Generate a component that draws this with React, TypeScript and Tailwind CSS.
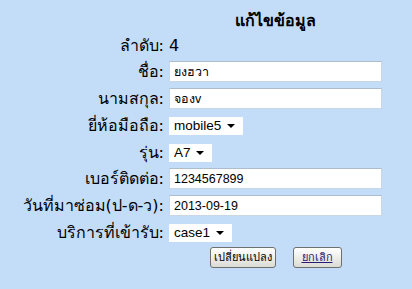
const thai = "font-['Tahoma','DejaVu_Sans','Noto_Sans',sans-serif]";

const Label = ({ children }: { children: React.ReactNode }) => (
  <div className={`w-[165px] shrink-0 text-right pr-[1px] text-[16px] text-black ${thai}`}>{children}</div>
);

const Row = ({ h, label, children }: { h: string; label: string; children: React.ReactNode }) => (
  <div className={`flex items-center ${h}`}>
    <Label>{label}</Label>
    <div className="pl-[4px] flex items-center">{children}</div>
  </div>
);

const TextBox = ({ value }: { value: string }) => (
  <input
    defaultValue={value}
    className={`w-[213px] h-[21px] bg-white border border-[#c9d6e4] border-t-[#aebdcc] px-[4px] text-[12.5px] text-black outline-none font-['Tahoma','Liberation_Sans','DejaVu_Sans',sans-serif]`}
  />
);

// drawn like the old XP select: white box, text, small black arrow
const DropDown = ({ value, w }: { value: string; w: string }) => (
  <div className={`${w} h-[18px] bg-white flex items-center justify-between pl-[5px] pr-[8px]`}>
    <span className="text-[13.5px] leading-none text-black font-['Liberation_Sans',Arial,sans-serif]">{value}</span>
    <svg width="8" height="4" viewBox="0 0 8 4" className="shrink-0">
      <path d="M0 0H8L4 4Z" fill="#000" />
    </svg>
  </div>
);

const Btn = ({ w, children }: { w: string; children: React.ReactNode }) => (
  <button
    className={`${w} h-[21px] rounded-[3px] border border-[#6f6f6f] bg-gradient-to-b from-white to-[#dcdcd6] text-[11px] leading-none text-black ${thai}`}
  >
    {children}
  </button>
);

export default function App() {
  return (
    <div className="w-[412px] h-[289px] bg-[#c3dcf8] pt-[9px] overflow-hidden">
      <div className="flex items-center h-[24px]">
        <div className="w-[165px]" />
        <div className={`pl-[4px] w-[217px] text-center font-bold text-[16px] ${thai}`}>แก้ไขข้อมูล</div>
      </div>
      <Row h="h-[25px]" label="ลำดับ:">
        <span className={`text-[16px] ${thai}`}>4</span>
      </Row>
      <Row h="h-[27px]" label="ชื่อ:">
        <TextBox value="ยงฮวา" />
      </Row>
      <Row h="h-[27px]" label="นามสกุล:">
        <TextBox value="จองv" />
      </Row>
      <Row h="h-[28px]" label="ยี่ห้อมือถือ:">
        <DropDown value="mobile5" w="w-[74px]" />
      </Row>
      <Row h="h-[25px]" label="รุ่น:">
        <DropDown value="A7" w="w-[43px]" />
      </Row>
      <Row h="h-[27px]" label="เบอร์ติดต่อ:">
        <TextBox value="1234567899" />
      </Row>
      <Row h="h-[27px]" label="วันที่มาซ่อม(ป-ด-ว):">
        <TextBox value="2013-09-19" />
      </Row>
      <Row h="h-[28px]" label="บริการที่เข้ารับ:">
        <DropDown value="case1" w="w-[63px]" />
      </Row>
      <div className="flex">
        <div className="w-[165px]" />
        <div className="pl-[4px] w-[217px] flex justify-center gap-[17px]">
          <Btn w="w-[66px]">เปลี่ยนแปลง</Btn>
          <Btn w="w-[49px]">
            <span className="underline text-[#2a1a6e]">ยกเลิก</span>
          </Btn>
        </div>
      </div>
    </div>
  );
}
